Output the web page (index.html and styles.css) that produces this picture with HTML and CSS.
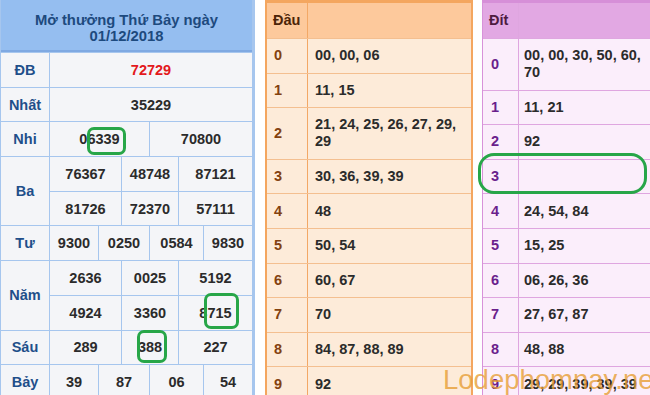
FILE: index.html
```html
<!DOCTYPE html>
<html lang="vi">
<head>
<meta charset="utf-8">
<title>Kết quả xổ số 01/12/2018</title>
<link rel="stylesheet" href="styles.css">
</head>
<body>
<div class="page">
  <div class="xs">
    <div class="hd">Mở thưởng Thứ Bảy ngày<br>01/12/2018</div>
    <div class="lb">ĐB</div><div class="v s6 red">72729</div>
    <div class="lb">Nhất</div><div class="v s6">35229</div>
    <div class="lb">Nhi</div><div class="v s3">06339</div><div class="v s3">70800</div>
    <div class="lb r2">Ba</div><div class="v s2">76367</div><div class="v s2">48748</div><div class="v s2">87121</div>
    <div class="v s2">81726</div><div class="v s2">72370</div><div class="v s2">57111</div>
    <div class="lb">Tư</div><div class="v">9300</div><div class="v s2">0250</div><div class="v s2">0584</div><div class="v">9830</div>
    <div class="lb r2">Năm</div><div class="v s2">2636</div><div class="v s2">0025</div><div class="v s2">5192</div>
    <div class="v s2">4924</div><div class="v s2">3360</div><div class="v s2">8715</div>
    <div class="lb">Sáu</div><div class="v s2">289</div><div class="v s2">388</div><div class="v s2">227</div>
    <div class="lb">Bảy</div><div class="v">39</div><div class="v s2">87</div><div class="v s2">06</div><div class="v">54</div>
  </div>

  <div class="lt dau">
    <div class="th">Đầu</div><div class="th"></div>
    <div class="k">0</div><div class="n">00, 00, 06</div>
    <div class="k">1</div><div class="n">11, 15</div>
    <div class="k">2</div><div class="n">21, 24, 25, 26, 27, 29, 29</div>
    <div class="k">3</div><div class="n">30, 36, 39, 39</div>
    <div class="k">4</div><div class="n">48</div>
    <div class="k">5</div><div class="n">50, 54</div>
    <div class="k">6</div><div class="n">60, 67</div>
    <div class="k">7</div><div class="n">70</div>
    <div class="k">8</div><div class="n">84, 87, 88, 89</div>
    <div class="k">9</div><div class="n">92</div>
  </div>

  <div class="lt dit">
    <div class="th">Đít</div><div class="th"></div>
    <div class="k">0</div><div class="n">00, 00, 30, 50, 60, 70</div>
    <div class="k">1</div><div class="n">11, 21</div>
    <div class="k">2</div><div class="n">92</div>
    <div class="k">3</div><div class="n"></div>
    <div class="k">4</div><div class="n">24, 54, 84</div>
    <div class="k">5</div><div class="n">15, 25</div>
    <div class="k">6</div><div class="n">06, 26, 36</div>
    <div class="k">7</div><div class="n">27, 67, 87</div>
    <div class="k">8</div><div class="n">48, 88</div>
    <div class="k">9</div><div class="n">29, 29, 39, 39, 39</div>
  </div>

  <div class="mark m1"></div>
  <div class="mark m2"></div>
  <div class="mark m3"></div>
  <div class="mark m4"></div>
  <div class="wm">Lodephomnay.net</div>
</div>
</body>
</html>
```

FILE: styles.css
```css
html, body {
  margin: 0;
  padding: 0;
  background: #ffffff;
  overflow: hidden;
}
body {
  font-family: "Liberation Sans", Arial, sans-serif;
  font-size: 14.5px;
  font-weight: bold;
  color: #2b2b2b;
}
.page {
  position: relative;
  width: 650px;
  height: 395px;
  overflow: hidden;
  display: flex;
  align-items: flex-start;
}

/* left results table */
.xs {
  flex: none;
  width: 255px;
  box-sizing: border-box;
  display: grid;
  grid-template-columns: 48px 48px 22px 27px 28px 24px 48px;
  grid-template-rows: 52px;
  grid-auto-rows: 33.7px;
  gap: 1px;
  padding: 0 3px 0 1px;
  background: #a6c6ee;
}
.xs .hd {
  grid-column: 1 / -1;
  background: #95bef0;
  border-bottom: 2px solid #7fa9e2;
  color: #1d4a7e;
  font-size: 14.8px;
  line-height: 16px;
  text-align: center;
  display: flex;
  align-items: center;
  justify-content: center;
  padding-top: 5px;
}
.xs .lb, .xs .v {
  background: #f4f5f8;
  display: flex;
  align-items: center;
  justify-content: center;
}
.xs .lb { color: #1f4f8a; }
.xs .r2 { grid-row: span 2; }
.xs .s2 { grid-column: span 2; }
.xs .s3 { grid-column: span 3; }
.xs .s6 { grid-column: span 6; }
.xs .red { color: #e3191c; }

/* loto tables */
.lt {
  flex: none;
  display: grid;
  gap: 1px;
  box-sizing: border-box;
  line-height: 17px;
}
.lt .th, .lt .k, .lt .n {
  padding: 8.3px 6px;
  min-height: 17px;
}
.lt .th { padding-top: 9px; padding-bottom: 9px; }
.lt .k { display: flex; align-items: center; padding-left: 7px; }
.lt .n { padding-left: 7px; }

.dau {
  margin-left: 10px;
  width: 208px;
  grid-template-columns: 40px 1fr;
  background: #f4bf90;
  border: 2px solid #f4a65f;
  border-top: 3px solid #f4a65f;
}
.dau .th { background: #fdc99c; color: #4c2408; }
.dau .k { background: #fdebd9; color: #83410f; }
.dau .n { background: #fdebd9; }
.dau .th:first-child, .dau .k { box-shadow: 1px 0 0 #f3a866; }

.dit {
  margin-left: 9px;
  width: 180px;
  grid-template-columns: 35px 1fr;
  background: #dfa6e0;
  border: 1px solid #d892da;
  border-top: 3px solid #d68fd8;
}
.dit .th { background: #e2a8e3; color: #4d1b40; }
.dit .k { background: #fbeefb; color: #6a1f8c; padding-left: 8px; }
.dit .n { background: #fbeefb; padding-left: 5px; }

/* highlight marks */
.mark {
  position: absolute;
  box-sizing: border-box;
  border: 3px solid #27a648;
  border-radius: 7px;
}
.m1 { left: 87px; top: 127px; width: 39px; height: 28px; }
.m2 { left: 204px; top: 293px; width: 35px; height: 36px; }
.m3 { left: 137px; top: 330px; width: 30px; height: 33px; }
.m4 { left: 478px; top: 153px; width: 169px; height: 41px; border-radius: 16px; }

.wm {
  position: absolute;
  left: 443px;
  top: 365px;
  font-size: 27.5px;
  line-height: 30px;
  font-weight: normal;
  color: rgba(231, 158, 52, 0.8);
  white-space: nowrap;
}
```
